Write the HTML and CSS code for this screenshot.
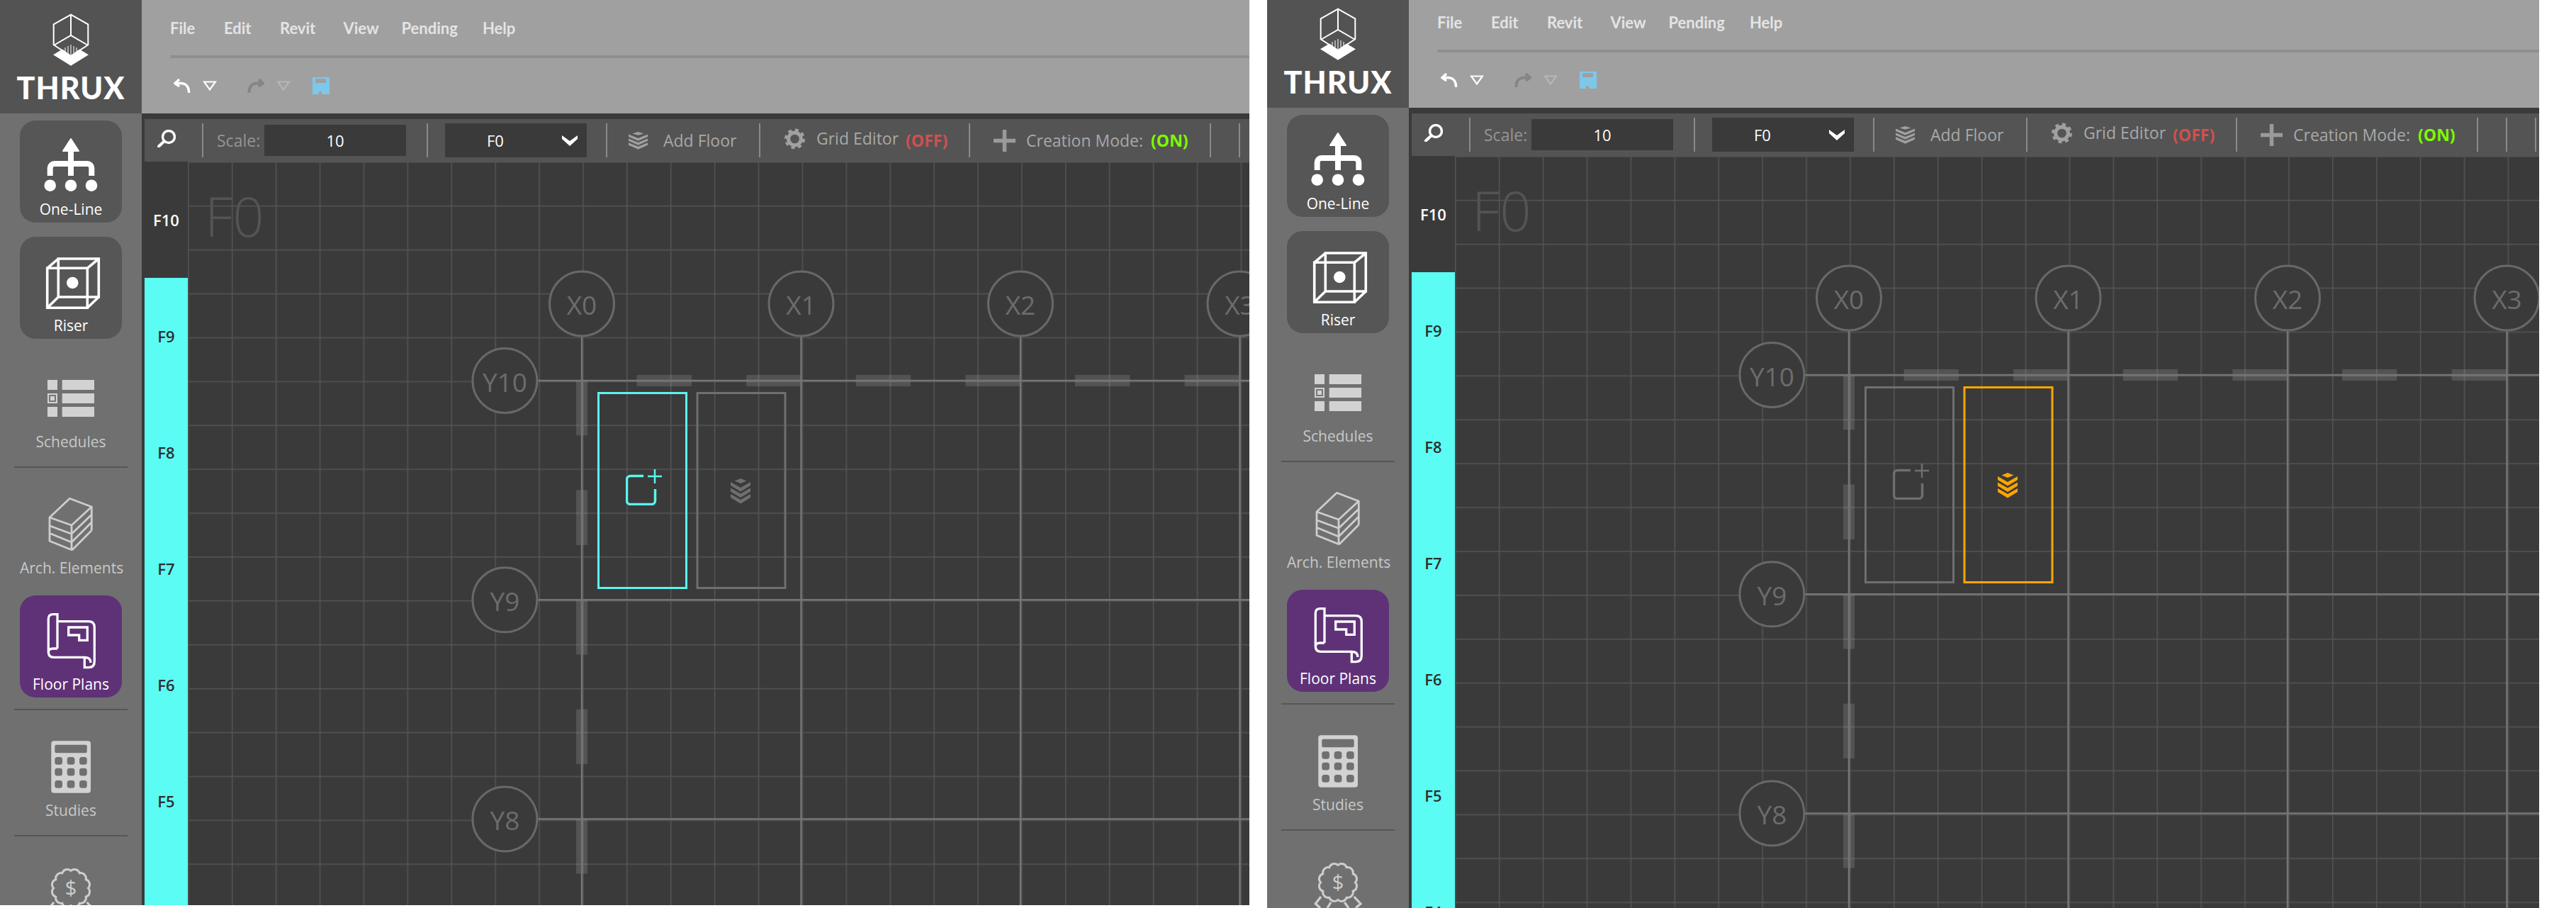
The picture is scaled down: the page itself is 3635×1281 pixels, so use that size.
FILE: index.html
```html
<!DOCTYPE html>
<html lang="en">

<head>
    <meta charset="UTF-8">
    <title>THRUX Floor Plans</title>
    <link rel="stylesheet" href="styles.css">
</head>

<body>
    <!-- Shared icons -->
    <svg class="icon-defs" aria-hidden="true">
        <defs>
            <pattern id="grid-cell" width="61.9" height="61.9" patternUnits="userSpaceOnUse">
                <rect width="1.5" height="61.9" fill="#545454"></rect>
                <rect width="61.9" height="1.5" fill="#545454"></rect>
            </pattern>
        </defs>
        <symbol id="i-logo" viewBox="0 0 200 100">
            <path d="M100 20.7 124.3 34.3V63.3L100 79 75.7 63.3V34.3ZM100 20.7V50M75.7 64 100 50 124.3 64" fill="none" stroke="#fff" stroke-width="2"></path>
            <path d="M75 77.3 88 69.5 100 78 112 69.5 125 77.3 100 92.7Z" fill="#fff"></path>
            <path d="M92 67V73M96 65V76M100 63V78M104 65V76M108 67V73" stroke="#ddd" stroke-width="1.3"></path>
        </symbol>
        <symbol id="i-oneline" viewBox="0 0 144 110">
            <path d="M72 26 83 43H61Z" fill="#fff" stroke="#fff" stroke-width="2" stroke-linejoin="round"></path>
            <path d="M42.7 78V67a6 6 0 0 1 6-6H95.300a6 6 0 0 1 6 6V78M72 40V78" fill="none" stroke="#fff" stroke-width="8"></path>
            <circle cx="42.700" cy="91.700" r="8.300" fill="#fff"></circle>
            <circle cx="72" cy="91.700" r="8.300" fill="#fff"></circle>
            <circle cx="101" cy="91.700" r="8.300" fill="#fff"></circle>
        </symbol>
        <symbol id="i-riser" viewBox="0 0 144 110">
            <path d="M38.700 44.300H95.300V100.300H38.700ZM54.300 31H111.300V85H54.300ZM38.700 44.300 54.300 31M95.300 44.300 111.300 31M95.300 100.300 111.300 85M38.700 100.300 54.300 85" fill="none" stroke="#fff" stroke-width="3.600"></path>
            <circle cx="74.300" cy="65" r="8.300" fill="#fff"></circle>
        </symbol>
        <symbol id="i-schedules" viewBox="0 0 144 110">
            <path d="M39 38H53V52H39ZM39 76H53V90H39ZM39 57H53V71H39ZM59.700 38H105V52H59.700ZM59.700 57H105V71H59.700ZM59.700 76H105V90H59.700Z" fill="#d2d2d2"></path>
            <rect x="41" y="59" width="10" height="10" fill="#777"></rect>
            <rect x="43" y="61" width="6" height="6" fill="#d2d2d2"></rect>
        </symbol>
        <symbol id="i-arch" viewBox="0 0 144 110">
            <path d="M70.300 27.300 101.300 39 73 65 42 54ZM42 54V87.300L73.700 100M73 65V100M42 65.700 73 77.300M42 76.300 73 89M73 77.300 101.300 50M73 89 101.300 60.700M73.700 100 101.300 72.300M101.300 39V72.300" fill="none" stroke="#cdcdcd" stroke-width="2.800" stroke-linejoin="round"></path>
        </symbol>
        <symbol id="i-floorplan" viewBox="0 0 144 110">
            <path d="M53 75V26.700H47Q40.300 26.700 40.300 33V80Q40.300 87.300 48 87.300H91.300M40.300 80Q40.300 75 47 75H53M53 36.700H97Q105.300 36.700 105.300 45V93Q105.300 101.700 97 101.700H91.300V87.300Q100 87.300 100 95M68.700 45H95.300V63.300H83.700V56H68.700Z" fill="none" stroke="#fff" stroke-width="3.300"></path>
        </symbol>
        <symbol id="i-studies" viewBox="0 0 144 110">
            <rect x="44.300" y="27.300" width="55.700" height="73.400" rx="4" fill="#d2d2d2"></rect>
            <rect x="49.300" y="32.700" width="45.400" height="11.600" rx="2" fill="#707070"></rect>
            <g fill="#707070">
                <rect x="49.300" y="50" width="10.700" height="10.700" rx="3.500"></rect>
                <rect x="66.700" y="50" width="10.700" height="10.700" rx="3.500"></rect>
                <rect x="84" y="50" width="10.700" height="10.700" rx="3.500"></rect>
                <rect x="49.300" y="65.700" width="10.700" height="10.700" rx="3.500"></rect>
                <rect x="66.700" y="65.700" width="10.700" height="10.700" rx="3.500"></rect>
                <rect x="84" y="65.700" width="10.700" height="10.700" rx="3.500"></rect>
                <rect x="49.300" y="83" width="10.700" height="10.700" rx="3.500"></rect>
                <rect x="66.700" y="83" width="10.700" height="10.700" rx="3.500"></rect>
                <rect x="84" y="83" width="10.700" height="10.700" rx="3.500"></rect>
            </g>
        </symbol>
        <symbol id="i-award" viewBox="0 0 144 110">
            <path d="M72 32.500A7.500 7.500 0 0 1 84.250 35.800 7.500 7.500 0 0 1 93.200 44.750 7.500 7.500 0 0 1 96.500 57 7.500 7.500 0 0 1 93.200 69.250 7.500 7.500 0 0 1 84.250 78.200 7.500 7.500 0 0 1 72 81.500 7.500 7.500 0 0 1 59.750 78.200 7.500 7.500 0 0 1 50.800 69.250 7.500 7.500 0 0 1 47.500 57 7.500 7.500 0 0 1 50.800 44.750 7.500 7.500 0 0 1 59.750 35.800 7.500 7.500 0 0 1 72 32.500Z" fill="none" stroke="#cdcdcd" stroke-width="3"></path>
            <path d="M48 77 40.300 87 47 93M62 85 57 93M94.700 77 104 87 97 93M81.300 85 87 93" fill="none" stroke="#cdcdcd" stroke-width="3.300"></path>
        </symbol>
        <symbol id="i-undo" viewBox="0 0 24 21">
            <path d="M8 1 2 6.500 8 11M3 6.500H10C17 6.500 22 11 21.500 20" fill="none" stroke="currentColor" stroke-width="3.400"></path>
        </symbol>
        <symbol id="i-redo" viewBox="0 0 24 21">
            <path d="M16 1 22 6.500 16 11M21 6.500H14C7 6.500 2 11 2.500 20" fill="none" stroke="currentColor" stroke-width="4"></path>
        </symbol>
        <symbol id="i-drop" viewBox="0 0 20 14">
            <path d="M2 1.500H18L10 12.500Z" fill="none" stroke="currentColor" stroke-width="2.200"></path>
        </symbol>
        <symbol id="i-save" viewBox="0 0 24 24">
            <path d="M0 0H24V24H0ZM4 2V8H19V2ZM9 20V24H13V20Z" fill="#7dc8ea" fill-rule="evenodd"></path>
        </symbol>
        <symbol id="i-search" viewBox="0 0 26 25">
            <circle cx="16" cy="10" r="8.500" fill="none" stroke="#fff" stroke-width="3.400"></circle>
            <path d="M10 16 2 23.500" stroke="#fff" stroke-width="4" stroke-linecap="round"></path>
        </symbol>
        <symbol id="i-chevron" viewBox="0 0 22 15">
            <path d="M0 0 11 8 22 0V5L11 15 0 5Z" fill="#fff"></path>
        </symbol>
        <symbol id="i-layers" viewBox="0 0 28 36" preserveAspectRatio="none">
            <path d="M14 0 22.500 3.500 14 7 5.500 3.500ZM0 5 14 13 28 5V10L14 18.500 0 10ZM0 13.500 14 21.500 28 13.500V18.500L14 27 0 18.500ZM0 22 14 30 28 22V27L14 35.500 0 27Z" fill="currentColor"></path>
        </symbol>
        <symbol id="i-gear" viewBox="0 0 32 32">
            <circle cx="16" cy="16" r="9.500" fill="none" stroke="#a0a0a0" stroke-width="5.500"></circle>
            <circle cx="16" cy="16" r="13.500" fill="none" stroke="#a0a0a0" stroke-width="4" stroke-dasharray="5.300 5.300"></circle>
        </symbol>
        <symbol id="i-plus" viewBox="0 0 31 31">
            <path d="M15.500 0V31M0 15.500H31" stroke="#9a9a9a" stroke-width="5.500"></path>
        </symbol>
        <symbol id="i-addbox" viewBox="0 0 52 52">
            <path d="M25 10.500H6.500A5 5 0 0 0 1.500 15.500V45.500A5 5 0 0 0 6.500 50.500H36.500A5 5 0 0 0 41.500 45.500V29" fill="none" stroke="currentColor" stroke-width="3.500"></path>
            <path d="M31 11H51M41 1V21" fill="none" stroke="currentColor" stroke-width="2.500"></path>
        </symbol>
    </svg>

    <div class="screens">
        <!-- Left capture: creation slot selected -->
        <div class="shot shot-first">
            <div class="app">
                <aside class="side">
                    <div class="side-logo">
                        <svg class="logo-mark"><use href="#i-logo"></use></svg>
                        <div class="logo-name">THRUX</div>
                    </div>
                    <nav class="side-nav">
                        <a class="nav-item is-dark"><svg class="nav-icon"><use href="#i-oneline"></use></svg><span>One-Line</span></a>
                        <a class="nav-item is-dark"><svg class="nav-icon"><use href="#i-riser"></use></svg><span>Riser</span></a>
                        <a class="nav-item"><svg class="nav-icon"><use href="#i-schedules"></use></svg><span>Schedules</span></a>
                        <hr class="nav-rule">
                        <a class="nav-item"><svg class="nav-icon"><use href="#i-arch"></use></svg><span>Arch. Elements</span></a>
                        <a class="nav-item is-active"><svg class="nav-icon"><use href="#i-floorplan"></use></svg><span>Floor Plans</span></a>
                        <hr class="nav-rule">
                        <a class="nav-item"><svg class="nav-icon"><use href="#i-studies"></use></svg><span>Studies</span></a>
                        <hr class="nav-rule">
                        <a class="nav-item"><svg class="nav-icon"><use href="#i-award"></use><text class="award-sign" x="72" y="67">$</text></svg></a>
                    </nav>
                </aside>
                <main class="main">
                    <header class="menu-bar">
                        <ul class="menu-list">
                            <li>File</li><li>Edit</li><li>Revit</li><li>View</li><li>Pending</li><li>Help</li>
                        </ul>
                        <div class="menu-rule"></div>
                        <div class="quick">
                            <svg class="quick-arrow is-on"><use href="#i-undo"></use></svg>
                            <svg class="quick-drop is-on"><use href="#i-drop"></use></svg>
                            <svg class="quick-arrow is-off"><use href="#i-redo"></use></svg>
                            <svg class="quick-drop is-off"><use href="#i-drop"></use></svg>
                            <svg class="quick-save"><use href="#i-save"></use></svg>
                        </div>
                    </header>
                    <div class="work">
                        <div class="toolbar">
                            <div class="tool tool-search"><svg class="search-icon"><use href="#i-search"></use></svg></div>
                            <i class="tool-sep"></i>
                            <div class="tool tool-scale"><span class="tool-label">Scale:</span><div class="scale-field">10</div></div>
                            <i class="tool-sep"></i>
                            <div class="tool tool-floor"><div class="floor-select"><span>F0</span><svg class="chevron"><use href="#i-chevron"></use></svg></div></div>
                            <i class="tool-sep"></i>
                            <div class="tool tool-add"><svg class="add-icon"><use href="#i-layers"></use></svg><span class="tool-text">Add Floor</span></div>
                            <i class="tool-sep"></i>
                            <div class="tool tool-grid"><svg class="gear-icon"><use href="#i-gear"></use></svg><span class="tool-text is-raised">Grid Editor</span><b class="state-off">(OFF)</b></div>
                            <i class="tool-sep"></i>
                            <div class="tool tool-mode"><svg class="plus-icon"><use href="#i-plus"></use></svg><span class="tool-text">Creation Mode:</span><b class="state-on">(ON)</b></div>
                            <i class="tool-sep"></i>
                            <div class="tool tool-blank"></div>
                            <i class="tool-sep"></i>
                            <div class="tool tool-blank"></div>
                            <i class="tool-sep"></i>
                        </div>
                        <div class="stage">
                            <ul class="floors">
                                <li class="is-top">F10</li><li>F9</li><li>F8</li><li>F7</li><li>F6</li><li>F5</li>
                            </ul>
                            <div class="canvas">
                                <svg class="plan" width="1600" height="1072">
                                    <rect width="1600" height="1072" fill="url(#grid-cell)"></rect>
                                    <text class="plan-title" x="24" y="106">F0</text>
                                    <path class="plan-dash" d="M633.600 309H1600M556 309V1072"></path>
                                    <path class="plan-axis" d="M556 246V1072M865.500 246V1072M1175 246V1072M1484.500 246V1072M493 309H1600M493 618.300H1600M493 927.400H1600"></path>
                                    <g class="plan-bubbles">
                                        <circle cx="556" cy="200.500" r="45.500"></circle><text x="556" y="216">X0</text>
                                        <circle cx="865.500" cy="200.500" r="45.500"></circle><text x="865.500" y="216">X1</text>
                                        <circle cx="1175" cy="200.500" r="45.500"></circle><text x="1175" y="216">X2</text>
                                        <circle cx="1484.500" cy="200.500" r="45.500"></circle><text x="1484.500" y="216">X3</text>
                                        <circle cx="447.400" cy="309" r="45.500"></circle><text x="447.400" y="324.500">Y10</text>
                                        <circle cx="447.400" cy="618.300" r="45.500"></circle><text x="447.400" y="634">Y9</text>
                                        <circle cx="447.400" cy="927.400" r="45.500"></circle><text x="447.400" y="943">Y8</text>
                                    </g>
                                    <rect class="slot slot-cyan" x="579.500" y="326.500" width="124" height="275"></rect>
                                    <rect class="slot" x="719" y="326.500" width="124" height="275"></rect>
                                    <use class="slot-icon slot-icon-cyan" href="#i-addbox" x="618" y="433" width="52" height="52"></use>
                                    <use class="slot-icon" href="#i-layers" x="766" y="447" width="28" height="36"></use>
                                </svg>
                            </div>
                        </div>
                    </div>
                </main>
            </div>
        </div>

        <!-- Right capture: floor slot selected, scrolled 8px further -->
        <div class="shot shot-second">
            <div class="app">
                <aside class="side">
                    <div class="side-logo">
                        <svg class="logo-mark"><use href="#i-logo"></use></svg>
                        <div class="logo-name">THRUX</div>
                    </div>
                    <nav class="side-nav">
                        <a class="nav-item is-dark"><svg class="nav-icon"><use href="#i-oneline"></use></svg><span>One-Line</span></a>
                        <a class="nav-item is-dark"><svg class="nav-icon"><use href="#i-riser"></use></svg><span>Riser</span></a>
                        <a class="nav-item"><svg class="nav-icon"><use href="#i-schedules"></use></svg><span>Schedules</span></a>
                        <hr class="nav-rule">
                        <a class="nav-item"><svg class="nav-icon"><use href="#i-arch"></use></svg><span>Arch. Elements</span></a>
                        <a class="nav-item is-active"><svg class="nav-icon"><use href="#i-floorplan"></use></svg><span>Floor Plans</span></a>
                        <hr class="nav-rule">
                        <a class="nav-item"><svg class="nav-icon"><use href="#i-studies"></use></svg><span>Studies</span></a>
                        <hr class="nav-rule">
                        <a class="nav-item"><svg class="nav-icon"><use href="#i-award"></use><text class="award-sign" x="72" y="67">$</text></svg></a>
                    </nav>
                </aside>
                <main class="main">
                    <header class="menu-bar">
                        <ul class="menu-list">
                            <li>File</li><li>Edit</li><li>Revit</li><li>View</li><li>Pending</li><li>Help</li>
                        </ul>
                        <div class="menu-rule"></div>
                        <div class="quick">
                            <svg class="quick-arrow is-on"><use href="#i-undo"></use></svg>
                            <svg class="quick-drop is-on"><use href="#i-drop"></use></svg>
                            <svg class="quick-arrow is-off"><use href="#i-redo"></use></svg>
                            <svg class="quick-drop is-off"><use href="#i-drop"></use></svg>
                            <svg class="quick-save"><use href="#i-save"></use></svg>
                        </div>
                    </header>
                    <div class="work">
                        <div class="toolbar">
                            <div class="tool tool-search"><svg class="search-icon"><use href="#i-search"></use></svg></div>
                            <i class="tool-sep"></i>
                            <div class="tool tool-scale"><span class="tool-label">Scale:</span><div class="scale-field">10</div></div>
                            <i class="tool-sep"></i>
                            <div class="tool tool-floor"><div class="floor-select"><span>F0</span><svg class="chevron"><use href="#i-chevron"></use></svg></div></div>
                            <i class="tool-sep"></i>
                            <div class="tool tool-add"><svg class="add-icon"><use href="#i-layers"></use></svg><span class="tool-text">Add Floor</span></div>
                            <i class="tool-sep"></i>
                            <div class="tool tool-grid"><svg class="gear-icon"><use href="#i-gear"></use></svg><span class="tool-text is-raised">Grid Editor</span><b class="state-off">(OFF)</b></div>
                            <i class="tool-sep"></i>
                            <div class="tool tool-mode"><svg class="plus-icon"><use href="#i-plus"></use></svg><span class="tool-text">Creation Mode:</span><b class="state-on">(ON)</b></div>
                            <i class="tool-sep"></i>
                            <div class="tool tool-blank"></div>
                            <i class="tool-sep"></i>
                            <div class="tool tool-blank"></div>
                            <i class="tool-sep"></i>
                        </div>
                        <div class="stage">
                            <ul class="floors">
                                <li class="is-top">F10</li><li>F9</li><li>F8</li><li>F7</li><li>F6</li><li>F5</li><li>F4</li>
                            </ul>
                            <div class="canvas">
                                <svg class="plan" width="1600" height="1072">
                                    <rect width="1600" height="1072" fill="url(#grid-cell)"></rect>
                                    <text class="plan-title" x="24" y="106">F0</text>
                                    <path class="plan-dash" d="M633.600 309H1600M556 309V1072"></path>
                                    <path class="plan-axis" d="M556 246V1072M865.500 246V1072M1175 246V1072M1484.500 246V1072M493 309H1600M493 618.300H1600M493 927.400H1600"></path>
                                    <g class="plan-bubbles">
                                        <circle cx="556" cy="200.500" r="45.500"></circle><text x="556" y="216">X0</text>
                                        <circle cx="865.500" cy="200.500" r="45.500"></circle><text x="865.500" y="216">X1</text>
                                        <circle cx="1175" cy="200.500" r="45.500"></circle><text x="1175" y="216">X2</text>
                                        <circle cx="1484.500" cy="200.500" r="45.500"></circle><text x="1484.500" y="216">X3</text>
                                        <circle cx="447.400" cy="309" r="45.500"></circle><text x="447.400" y="324.500">Y10</text>
                                        <circle cx="447.400" cy="618.300" r="45.500"></circle><text x="447.400" y="634">Y9</text>
                                        <circle cx="447.400" cy="927.400" r="45.500"></circle><text x="447.400" y="943">Y8</text>
                                    </g>
                                    <rect class="slot" x="579.500" y="326.500" width="124" height="275"></rect>
                                    <rect class="slot slot-orange" x="719" y="326.500" width="124" height="275"></rect>
                                    <use class="slot-icon" href="#i-addbox" x="618" y="433" width="52" height="52"></use>
                                    <use class="slot-icon slot-icon-orange" href="#i-layers" x="766" y="447" width="28" height="36"></use>
                                </svg>
                            </div>
                        </div>
                    </div>
                </main>
            </div>
        </div>
    </div>
</body>

</html>
```
FILE: styles.css
```css
* {
    box-sizing: border-box;
}

html,
body {
    margin: 0;
    padding: 0;
    background-color: #fff;
    overflow: hidden;
}

body {
    font-family: "Open Sans", "Noto Sans", sans-serif;
}

ul {
    list-style: none;
    margin: 0;
    padding: 0;
}

.icon-defs {
    position: absolute;
    width: 0;
    height: 0;
}

.award-sign {
    font-size: 29px;
    fill: #cdcdcd;
    text-anchor: middle;
}

.screens {
    display: flex;
    gap: 25px;
    align-items: flex-start;
}

.shot {
    overflow: hidden;
    flex: none;
}

.shot-first {
    width: 1763px;
    height: 1277px;
}

.shot-second {
    width: 1795px;
    height: 1281px;
}

.shot-second .app {
    margin-top: -8px;
}

.app {
    display: flex;
    height: 1300px;
}

/* Sidebar */
.side {
    width: 200px;
    flex: none;
    background-color: #707070;
    overflow: hidden;
}

.side-logo {
    height: 160px;
    background-color: #535353;
}

.logo-mark {
    display: block;
    width: 200px;
    height: 100px;
}

.logo-name {
    height: 48px;
    line-height: 48px;
    text-align: center;
    font-family: Lato, "Open Sans", sans-serif;
    font-weight: 900;
    font-size: 43px;
    letter-spacing: 1px;
    color: #fff;
}

.side-nav {
    display: flex;
    flex-direction: column;
    align-items: center;
    gap: 20px;
    padding-top: 10px;
}

.nav-item {
    width: 144px;
    height: 144px;
    flex: none;
    border-radius: 22px;
    color: #c8c8c8;
    font-size: 21px;
    line-height: 30px;
    text-align: center;
    white-space: nowrap;
}

.nav-item.is-dark {
    background-color: #565656;
    color: #fff;
}

.nav-item.is-active {
    background-color: #5f3278;
    color: #fff;
}

.nav-icon {
    display: block;
    width: 144px;
    height: 110px;
}

.nav-rule {
    width: 160px;
    height: 2px;
    flex: none;
    margin: -4px 0;
    border: 0;
    background-color: #565656;
}

/* Menu */
.main {
    flex: 1;
    min-width: 0;
    display: flex;
    flex-direction: column;
}

.menu-bar {
    height: 160px;
    flex: none;
    padding-left: 40px;
    background-color: #a0a0a0;
}

.menu-list {
    display: grid;
    grid-template-columns: 76px 79px 89.500px 82px 114.500px auto;
    width: 520px;
    height: 78px;
    align-items: center;
    font-family: Lato, "Open Sans", sans-serif;
    font-weight: 700;
    font-size: 22px;
    color: #e4e4e4;
}

.menu-rule {
    height: 4px;
    background-color: #8f8f8f;
}

.quick {
    display: flex;
    align-items: center;
    height: 78px;
    padding-left: 5px;
    color: #fff;
}

.quick-arrow {
    width: 24px;
    height: 21px;
    margin-right: 17px;
}

.quick-drop {
    width: 20px;
    height: 14px;
    margin-right: 43px;
}

.is-on {
    color: #fff;
}

.is-off {
    color: #868686;
}

.quick-drop.is-off {
    color: #b6b6b6;
    margin-right: 31px;
}

.quick-save {
    width: 24px;
    height: 24px;
}

/* Toolbar */
.work {
    flex: 1;
    min-height: 0;
    display: flex;
    flex-direction: column;
    padding: 8px 0 0 4px;
    background-color: #3a3a3a;
}

.toolbar {
    display: flex;
    align-items: center;
    height: 60px;
    flex: none;
    background-color: #545454;
    font-size: 23px;
    white-space: nowrap;
}

.tool {
    display: flex;
    align-items: center;
    height: 100%;
    flex: none;
}

.tool-sep {
    width: 2px;
    height: 48px;
    flex: none;
    background-color: #8a8a8a;
}

.tool-search {
    width: 81px;
    padding-left: 18px;
}

.search-icon {
    width: 26px;
    height: 25px;
    margin-top: -6px;
}

.tool-scale {
    width: 315px;
    padding-left: 19px;
}

.tool-label {
    width: 67px;
    color: #959595;
}

.scale-field {
    width: 200px;
    height: 44px;
    line-height: 44px;
    font-size: 22px;
    text-align: center;
    color: #fff;
    background-color: #3a3a3a;
}

.tool-floor {
    width: 251px;
    padding-left: 24px;
}

.floor-select {
    display: flex;
    align-items: center;
    width: 200px;
    height: 48px;
    padding: 0 13px 0 59px;
    font-size: 22px;
    color: #fff;
    background-color: #3a3a3a;
}

.chevron {
    width: 22px;
    height: 15px;
    margin-left: auto;
}

.tool-add {
    width: 214px;
    padding-left: 30px;
}

.add-icon {
    width: 27px;
    height: 25px;
    margin-right: 22px;
    color: #a0a0a0;
}

.tool-text {
    color: #a8a8a8;
}

.is-raised {
    margin-top: -6px;
}

.tool-grid {
    width: 294px;
    padding-left: 33px;
}

.gear-icon {
    width: 31px;
    height: 30px;
    margin: -4px 15px 0 0;
}

.state-off {
    margin-left: 10px;
    color: #d05050;
}

.tool-mode {
    width: 338px;
    padding-left: 33px;
}

.plus-icon {
    width: 31px;
    height: 31px;
    margin-right: 15px;
}

.state-on {
    margin-left: 11px;
    color: #7cfc00;
}

.tool-blank {
    width: 39px;
}

/* Floors and plan */
.stage {
    flex: 1;
    min-height: 0;
    display: flex;
}

.floors {
    width: 61px;
    flex: none;
    background-color: #5bfcf3;
    font-size: 22px;
    font-weight: 600;
    color: #2e2e2e;
    text-align: center;
}

.floors li {
    height: 164px;
    line-height: 164px;
}

.floors .is-top {
    background-color: #3a3a3a;
    color: #fff;
}

.canvas {
    flex: 1;
    min-width: 0;
    overflow: hidden;
}

.plan {
    display: block;
}

.plan-title {
    font-size: 78px;
    font-weight: 300;
    fill: #545454;
}

.plan-dash {
    fill: none;
    stroke: rgba(255, 255, 255, 0.13);
    stroke-width: 16;
    stroke-dasharray: 77.300;
}

.plan-axis {
    fill: none;
    stroke: #757575;
    stroke-width: 2.500;
}

.plan-bubbles circle {
    fill: #3a3a3a;
    stroke: #686868;
    stroke-width: 3;
}

.plan-bubbles text {
    font-size: 37px;
    fill: #6c6c6c;
    text-anchor: middle;
}

.slot {
    fill: none;
    stroke: #6f6f6f;
    stroke-width: 3;
}

.slot-cyan {
    stroke: #5af5ee;
}

.slot-orange {
    stroke: #ffa500;
}

.slot-icon {
    color: #6f6f6f;
}

.slot-icon-cyan {
    color: #5af5ee;
}

.slot-icon-orange {
    color: #ffa500;
}
```
